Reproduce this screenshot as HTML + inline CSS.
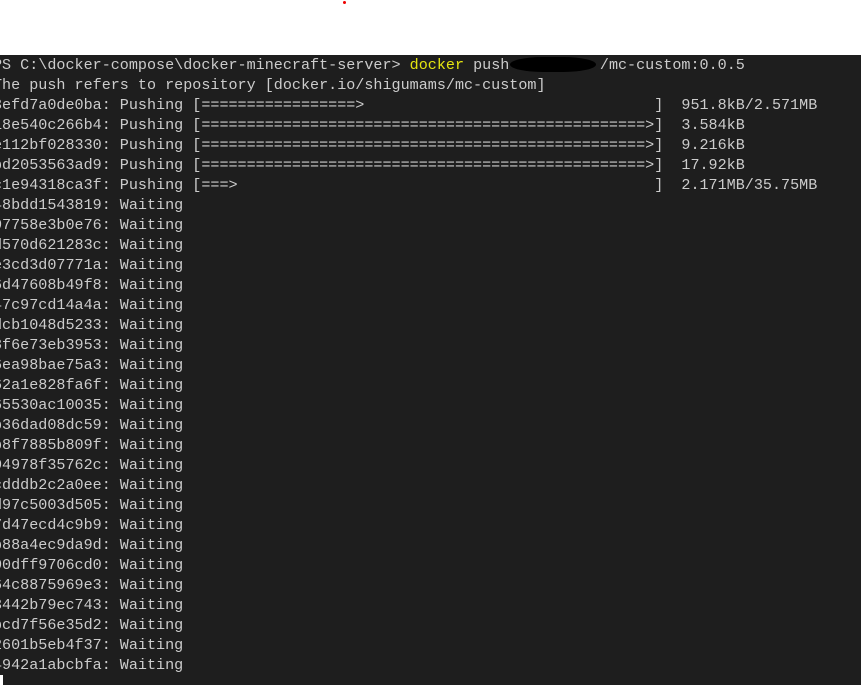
<!DOCTYPE html>
<html><head><meta charset="utf-8"><style>
html,body{margin:0;padding:0;width:861px;height:685px;overflow:hidden;background:#fff;position:relative}
#t{position:absolute;left:0;top:55px;width:861px;height:630px;background:#1e1e1e;overflow:hidden}
pre{position:absolute;left:-7px;top:0;margin:0;font-family:"Liberation Mono",monospace;font-size:15.1px;line-height:20px;color:#cccccc;white-space:pre}
.y{color:#e5e510}
#blob{position:absolute;left:510px;top:2px;width:86px;height:15px;background:#000;border-radius:45%/60%}
#cur{position:absolute;left:0;top:620px;width:3px;height:10px;background:#fff}
#dot{position:absolute;left:343px;top:1px;width:3px;height:3px;background:#e00;border-radius:50%}
</style></head><body>
<div id="dot"></div>
<div id="t">
<pre>PS C:\docker-compose\docker-minecraft-server&gt; <span class="y">docker</span> push          /mc-custom:0.0.5
The push refers to repository [docker.io/shigumams/mc-custom]
3efd7a0de0ba: Pushing [=================&gt;                                ]  951.8kB/2.571MB
18e540c266b4: Pushing [=================================================&gt;]  3.584kB
e112bf028330: Pushing [=================================================&gt;]  9.216kB
bd2053563ad9: Pushing [=================================================&gt;]  17.92kB
c1e94318ca3f: Pushing [===&gt;                                              ]  2.171MB/35.75MB
48bdd1543819: Waiting
07758e3b0e76: Waiting
d570d621283c: Waiting
e3cd3d07771a: Waiting
6d47608b49f8: Waiting
47c97cd14a4a: Waiting
dcb1048d5233: Waiting
8f6e73eb3953: Waiting
6ea98bae75a3: Waiting
62a1e828fa6f: Waiting
65530ac10035: Waiting
b36dad08dc59: Waiting
b8f7885b809f: Waiting
04978f35762c: Waiting
cdddb2c2a0ee: Waiting
d97c5003d505: Waiting
7d47ecd4c9b9: Waiting
b88a4ec9da9d: Waiting
00dff9706cd0: Waiting
64c8875969e3: Waiting
3442b79ec743: Waiting
bcd7f56e35d2: Waiting
2601b5eb4f37: Waiting
4942a1abcbfa: Waiting</pre>
<div id="blob"></div>
<div id="cur"></div>
</div>
</body></html>
